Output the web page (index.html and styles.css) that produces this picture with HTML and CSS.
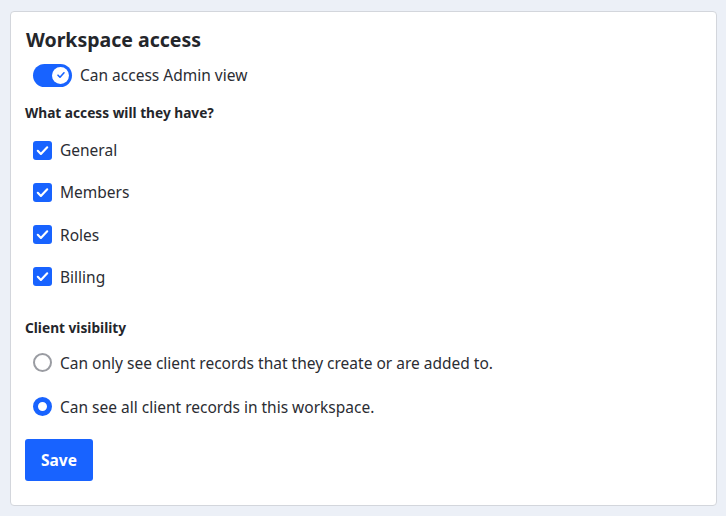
FILE: index.html
```html
<!DOCTYPE html>
<html lang="en">
<head>
    <meta charset="UTF-8">
    <title>Workspace access</title>
    <link rel="stylesheet" href="styles.css">
</head>
<body>
    <div class="card">
        <h2>Workspace access</h2>

        <label class="toggle-row">
            <span class="toggle">
                <span class="knob">
                    <svg width="12" height="12" viewBox="0 0 12 12"><path d="M3 6.2l2 2 4-4.4" fill="none" stroke="#1863ff" stroke-width="1.6" stroke-linecap="round" stroke-linejoin="round"/></svg>
                </span>
            </span>
            Can access Admin view
        </label>

        <h3>What access will they have?</h3>
        <div class="options">
            <label class="option"><span class="check"><svg width="15" height="15" viewBox="0 0 14 14"><path d="M2.6 7.3l2.9 2.9L11.4 4" fill="none" stroke="#fff" stroke-width="2" stroke-linecap="round" stroke-linejoin="round"/></svg></span>General</label>
            <label class="option"><span class="check"><svg width="15" height="15" viewBox="0 0 14 14"><path d="M2.6 7.3l2.9 2.9L11.4 4" fill="none" stroke="#fff" stroke-width="2" stroke-linecap="round" stroke-linejoin="round"/></svg></span>Members</label>
            <label class="option"><span class="check"><svg width="15" height="15" viewBox="0 0 14 14"><path d="M2.6 7.3l2.9 2.9L11.4 4" fill="none" stroke="#fff" stroke-width="2" stroke-linecap="round" stroke-linejoin="round"/></svg></span>Roles</label>
            <label class="option"><span class="check"><svg width="15" height="15" viewBox="0 0 14 14"><path d="M2.6 7.3l2.9 2.9L11.4 4" fill="none" stroke="#fff" stroke-width="2" stroke-linecap="round" stroke-linejoin="round"/></svg></span>Billing</label>
        </div>

        <h3 class="visibility">Client visibility</h3>
        <div class="options radios">
            <label class="option radio-option"><span class="radio"></span>Can only see client records that they create or are added to.</label>
            <label class="option radio-option"><span class="radio selected"></span>Can see all client records in this workspace.</label>
        </div>

        <button class="save">Save</button>
    </div>
</body>
</html>
```

FILE: styles.css
```css
* {
    margin: 0;
    padding: 0;
    box-sizing: border-box;
}

body {
    background-color: #ecf0f7;
    font-family: "Noto Sans", "Open Sans", sans-serif;
    color: #2b2d33;
    padding: 11px 9px 11px 10px;
}

.card {
    background-color: white;
    border: 1px solid #d3d6dc;
    border-radius: 4px;
    padding: 15px 14px 23px 14px;
    height: 495px;
}

h2 {
    font-size: 19.5px;
    font-weight: 700;
    color: #24262b;
    line-height: 26px;
    padding-left: 1px;
}

.toggle-row {
    display: flex;
    align-items: center;
    gap: 8px;
    margin: 10px 0 0 8px;
    font-size: 15.5px;
    line-height: 24px;
}

.toggle {
    width: 39px;
    height: 23px;
    border-radius: 12px;
    background-color: #1863ff;
    display: flex;
    align-items: center;
    justify-content: flex-end;
    padding-right: 3px;
}

.knob {
    width: 17px;
    height: 17px;
    border-radius: 50%;
    background-color: white;
    display: flex;
    align-items: center;
    justify-content: center;
}

h3 {
    font-size: 13.7px;
    font-weight: 700;
    color: #24262b;
    line-height: 20px;
    margin-top: 16px;
}

h3.visibility {
    margin-top: 29px;
}

.options {
    display: flex;
    flex-direction: column;
    gap: 18.3px;
    margin: 15px 0 0 8px;
}

.options.radios {
    margin-top: 13px;
    gap: 20px;
}

.option {
    display: flex;
    align-items: center;
    gap: 8px;
    font-size: 15.5px;
    line-height: 24px;
    height: 24px;
}

.check {
    width: 19px;
    height: 19px;
    border-radius: 3px;
    background-color: #1863ff;
    display: flex;
    align-items: center;
    justify-content: center;
}

.radio {
    width: 19px;
    height: 19px;
    border-radius: 50%;
    border: 2px solid #9a9ca2;
}

.radio.selected {
    border: 5px solid #1863ff;
}

.save {
    margin-top: 20px;
    width: 68px;
    height: 42px;
    border: none;
    border-radius: 3px;
    background-color: #1863ff;
    color: white;
    font-family: "Noto Sans", "Open Sans", sans-serif;
    font-size: 15.5px;
    font-weight: 700;
}
```
